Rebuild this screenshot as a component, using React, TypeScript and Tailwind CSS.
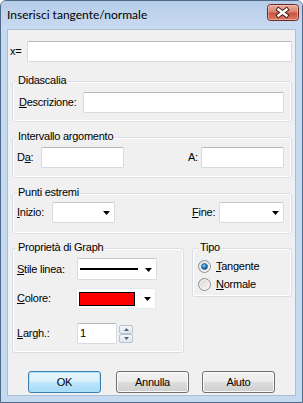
import React from "react";

function TextBox({ className = "", children }: { className?: string; children?: React.ReactNode }) {
  return (
    <div
      className={
        "h-[21px] bg-white border border-[#d6dbe2] border-t-[#b4b9c1] rounded-[2px] flex items-center " + className
      }
    >
      {children}
    </div>
  );
}

function Arrow() {
  return (
    <svg width="7" height="4" viewBox="0 0 7 4" className="shrink-0">
      <polygon points="0,0 7,0 3.5,4" fill="#000" />
    </svg>
  );
}

function Combo({ className = "", children }: { className?: string; children?: React.ReactNode }) {
  return (
    <div
      className={
        "bg-white border border-[#d6dbe2] border-t-[#c3c8cf] rounded-[2px] flex items-center " + className
      }
    >
      <div className="flex-1 flex items-center">{children}</div>
      <div className="mr-[4px] mt-[1px] flex items-center">
        <Arrow />
      </div>
    </div>
  );
}

function Group({
  label,
  labelClass = "left-[4px]",
  className = "",
  children,
}: {
  label: string;
  labelClass?: string;
  className?: string;
  children?: React.ReactNode;
}) {
  return (
    <div
      className={
        "relative border border-[#d5dfe5] rounded-[3px] shadow-[inset_0_0_0_1px_#ffffff] " + className
      }
    >
      <span className={"absolute -top-[8px] px-[1px] bg-[#f0f0f0] leading-[13px] whitespace-nowrap " + labelClass}>
        {label}
      </span>
      {children}
    </div>
  );
}

function Radio({ checked }: { checked: boolean }) {
  return (
    <svg width="13" height="13" viewBox="0 0 13 13" className="shrink-0">
      <defs>
        <linearGradient id={checked ? "rg1" : "rg0"} x1="0" y1="0" x2="1" y2="1">
          <stop offset="0" stopColor="#d4d4d4" />
          <stop offset="1" stopColor="#fbfbfb" />
        </linearGradient>
        <radialGradient id="dot" cx="0.4" cy="0.35" r="0.7">
          <stop offset="0" stopColor="#8fd2f7" />
          <stop offset="0.45" stopColor="#2f8bcf" />
          <stop offset="1" stopColor="#0e3f78" />
        </radialGradient>
      </defs>
      <circle cx="6.5" cy="6.5" r="6" fill={checked ? "url(#rg1)" : "url(#rg0)"} stroke="#8e8f8f" />
      <circle cx="6.5" cy="6.5" r="4.6" fill="none" stroke="#f4f4f4" strokeWidth="0.8" />
      {checked && <circle cx="6.5" cy="6.5" r="3" fill="url(#dot)" stroke="#1a4a7d" strokeWidth="0.6" />}
    </svg>
  );
}

function Button({ label, def = false, className = "" }: { label: string; def?: boolean; className?: string }) {
  return (
    <div
      className={
        "w-[73px] h-[22px] rounded-[3px] border flex items-center justify-center " +
        (def
          ? "border-[#3c7fb1] bg-[linear-gradient(to_bottom,#eaf6fd_0%,#d9f0fc_50%,#bee6fd_50%,#a7d9f5_100%)] shadow-[inset_0_0_0_1px_#a8e3fc] "
          : "border-[#707070] bg-[linear-gradient(to_bottom,#f2f2f2_0%,#ebebeb_50%,#dddddd_50%,#cfcfcf_100%)] shadow-[inset_0_0_0_1px_#fbfbfb] ") +
        className
      }
    >
      <span>{label}</span>
    </div>
  );
}

function Spinner() {
  return (
    <div className="ml-[2px] w-[14px] h-[18px] flex flex-col">
      <div className="h-[9px] border border-[#b8c3d1] rounded-[2px] bg-[linear-gradient(to_bottom,#f5f7fa,#dfe5ee)] flex items-center justify-center">
        <svg width="5" height="3" viewBox="0 0 5 3">
          <polygon points="0,3 5,3 2.5,0" fill="#4d6185" />
        </svg>
      </div>
      <div className="h-[9px] border border-[#b8c3d1] rounded-[2px] bg-[linear-gradient(to_bottom,#f5f7fa,#dfe5ee)] flex items-center justify-center">
        <svg width="5" height="3" viewBox="0 0 5 3">
          <polygon points="0,0 5,0 2.5,3" fill="#4d6185" />
        </svg>
      </div>
    </div>
  );
}

function CloseButton() {
  return (
    <svg width="32" height="17" viewBox="0 0 32 17" className="mt-[3px] mr-[3px] ml-auto shrink-0">
      <defs>
        <linearGradient id="cg" x1="0" y1="0" x2="0" y2="1">
          <stop offset="0" stopColor="#ebb1a4" />
          <stop offset="0.48" stopColor="#d88270" />
          <stop offset="0.52" stopColor="#c9523e" />
          <stop offset="1" stopColor="#dc7e67" />
        </linearGradient>
      </defs>
      <rect x="0.5" y="0.5" width="31" height="16" rx="3" fill="url(#cg)" stroke="#6b2b22" />
      <rect x="1.5" y="1.5" width="29" height="14" rx="2" fill="none" stroke="#f3c9bd" strokeOpacity="0.55" />
      <path d="M11.5 5.5 L19.5 11.5 M19.5 5.5 L11.5 11.5" stroke="#4b2019" strokeWidth="4.4" strokeLinecap="square" />
      <path d="M11.5 5.5 L19.5 11.5 M19.5 5.5 L11.5 11.5" stroke="#ffffff" strokeWidth="2.4" strokeLinecap="square" />
    </svg>
  );
}

export default function App() {
  return (
    <div className="w-[303px] h-[403px] bg-white">
      <div className="w-[303px] h-[403px] flex flex-col border border-[#4d6a8a] rounded-t-[6px] bg-[#c5d9ef] font-['Liberation_Sans',Arial,sans-serif] text-[11px] leading-[13px] tracking-[-0.25px] text-black overflow-hidden">
        {/* Title bar */}
        <div className="h-[28px] flex items-start bg-[linear-gradient(to_bottom,#b6cde8,#c9dbf0)]">
          <span className="mt-[6px] ml-[6px] font-['Lato',sans-serif] text-[12px] leading-[15px] tracking-normal text-black">
            Inserisci tangente/normale
          </span>
          <CloseButton />
        </div>

        {/* Client area */}
        <div className="mx-[6px] h-[367px] border border-[#a9bdd4] bg-[#f0f0f0] flex flex-col">
          {/* x= */}
          <div className="mt-[11px] ml-[2px] h-[21px] flex items-center">
            <span className="w-[17px]">x=</span>
            <TextBox className="w-[265px]" />
          </div>

          {/* Didascalia */}
          <Group label="Didascalia" className="mt-[19px] ml-[4px] w-[280px] h-[41px] pt-[10px] pl-[6px]">
            <div className="flex items-center">
              <span className="w-[64px]">
                <u>D</u>escrizione:
              </span>
              <TextBox className="w-[201px]" />
            </div>
          </Group>

          {/* Intervallo argomento */}
          <Group label="Intervallo argomento" className="mt-[15px] ml-[4px] w-[280px] h-[41px] pt-[9px] pl-[4px]">
            <div className="flex items-center">
              <span className="w-[24px]">
                D<u>a</u>:
              </span>
              <TextBox className="w-[83px]" />
              <span className="ml-[64px] w-[13px]">A:</span>
              <TextBox className="w-[83px]" />
            </div>
          </Group>

          {/* Punti estremi */}
          <Group label="Punti estremi" className="mt-[15px] ml-[4px] w-[280px] h-[41px] pt-[8px] pl-[4px]">
            <div className="flex items-center">
              <span className="w-[35px]">
                <u>I</u>nizio:
              </span>
              <Combo className="w-[63px] h-[21px]" />
              <span className="ml-[77px] w-[27px]">
                <u>F</u>ine:
              </span>
              <Combo className="w-[65px] h-[21px]" />
            </div>
          </Group>

          {/* Bottom groups */}
          <div className="mt-[14px] ml-[4px] flex items-start">
            <Group label="Proprietà di Graph" className="w-[172px] h-[105px] pt-[9px] pl-[4px] flex flex-col">
              <div className="h-[22px] flex items-center">
                <span className="w-[60px]">
                  <u>S</u>tile linea:
                </span>
                <Combo className="w-[80px] h-[22px]">
                  <div className="ml-[2px] w-[58px] h-[2px] bg-black" />
                </Combo>
              </div>
              <div className="mt-[8px] h-[21px] flex items-center">
                <span className="w-[59px]">
                  <u>C</u>olore:
                </span>
                <Combo className="w-[80px] h-[21px] border-[#e6e9ee] border-t-[#e6e9ee]">
                  <div className="ml-[2px] w-[56px] h-[14px] bg-[#ff0000] border border-black" />
                </Combo>
              </div>
              <div className="mt-[14px] h-[21px] flex items-center">
                <span className="w-[60px]">
                  <u>L</u>argh.:
                </span>
                <TextBox className="w-[40px]">
                  <span className="ml-[2px]">1</span>
                </TextBox>
                <Spinner />
              </div>
            </Group>

            <Group label="Tipo" labelClass="left-[6px]" className="ml-[8px] w-[100px] h-[49px] pt-[8px] pl-[5px] flex flex-col">
              <div className="h-[18px] flex items-center">
                <Radio checked={true} />
                <span className="ml-[5px]">
                  <u>T</u>angente
                </span>
              </div>
              <div className="h-[18px] flex items-center">
                <Radio checked={false} />
                <span className="ml-[5px]">
                  <u>N</u>ormale
                </span>
              </div>
            </Group>
          </div>

          {/* Buttons */}
          <div className="mt-[18px] flex items-center">
            <Button label="OK" def className="ml-[20px]" />
            <Button label="Annulla" className="ml-[15px]" />
            <Button label="Aiuto" className="ml-[13px]" />
          </div>
        </div>
      </div>
    </div>
  );
}
